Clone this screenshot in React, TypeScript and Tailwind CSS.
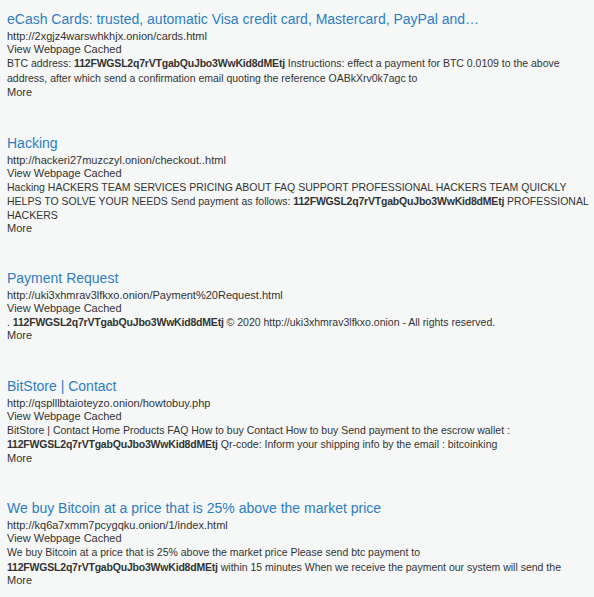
import React from "react";

type Part = { t: string; b?: boolean };
type Item = { title: string; url: string; parts: Part[]; lead: string };

const ADDR = "112FWGSL2q7rVTgabQuJbo3WwKid8dMEtj";

const items: Item[] = [
  {
    title: "eCash Cards: trusted, automatic Visa credit card, Mastercard, PayPal and…",
    url: "http://2xgjz4warswhkhjx.onion/cards.html",
    lead: "leading-[15px]",
    parts: [
      { t: "BTC address: " },
      { t: ADDR, b: true },
      { t: " Instructions: effect a payment for BTC 0.0109 to the above address, after which send a confirmation email quoting the reference OABkXrv0k7agc to" },
    ],
  },
  {
    title: "Hacking",
    url: "http://hackeri27muzczyl.onion/checkout..html",
    lead: "leading-[14px]",
    parts: [
      { t: "Hacking HACKERS TEAM SERVICES PRICING ABOUT FAQ SUPPORT PROFESSIONAL HACKERS TEAM QUICKLY HELPS TO SOLVE YOUR NEEDS Send payment as follows: " },
      { t: ADDR, b: true },
      { t: " PROFESSIONAL HACKERS" },
    ],
  },
  {
    title: "Payment Request",
    url: "http://uki3xhmrav3lfkxo.onion/Payment%20Request.html",
    lead: "leading-[14px]",
    parts: [
      { t: ". " },
      { t: ADDR, b: true },
      { t: " © 2020 http://uki3xhmrav3lfkxo.onion - All rights reserved." },
    ],
  },
  {
    title: "BitStore | Contact",
    url: "http://qsplllbtaioteyzo.onion/howtobuy.php",
    lead: "leading-[14.5px]",
    parts: [
      { t: "BitStore | Contact Home Products FAQ How to buy Contact How to buy Send payment to the escrow wallet : " },
      { t: ADDR, b: true },
      { t: " Qr-code: Inform your shipping info by the email : bitcoinking" },
    ],
  },
  {
    title: "We buy Bitcoin at a price that is 25% above the market price",
    url: "http://kq6a7xmm7pcygqku.onion/1/index.html",
    lead: "leading-[14.5px]",
    parts: [
      { t: "We buy Bitcoin at a price that is 25% above the market price Please send btc payment to " },
      { t: ADDR, b: true },
      { t: " within 15 minutes When we receive the payment our system will send the" },
    ],
  },
];

export default function App() {
  return (
    <div
      className="w-[594px] h-[597px] overflow-hidden bg-[#f6f8f8] text-[#333] pt-[8px] pl-[7px] pr-[4px]"
      style={{ fontFamily: '"Liberation Sans", Arial, sans-serif' }}
    >
      <div className="flex flex-col gap-[32.5px]">
        {items.map((it, i) => (
          <div key={i} className="flex flex-col">
            <div className="text-[14px] leading-[22px] text-[#2d7dc6] whitespace-nowrap">{it.title}</div>
            <div className="text-[11px] leading-[13px]">{it.url}</div>
            <div className="text-[11px] leading-[13px]">View Webpage Cached</div>
            <div className={"text-[10.5px] " + it.lead}>
              {it.parts.map((p, j) =>
                p.b ? (
                  <b key={j} className="font-bold tracking-[-0.2px]">{p.t}</b>
                ) : (
                  <span key={j}>{p.t}</span>
                )
              )}
            </div>
            <div className="text-[11px] leading-[13px]">More</div>
          </div>
        ))}
      </div>
    </div>
  );
}
